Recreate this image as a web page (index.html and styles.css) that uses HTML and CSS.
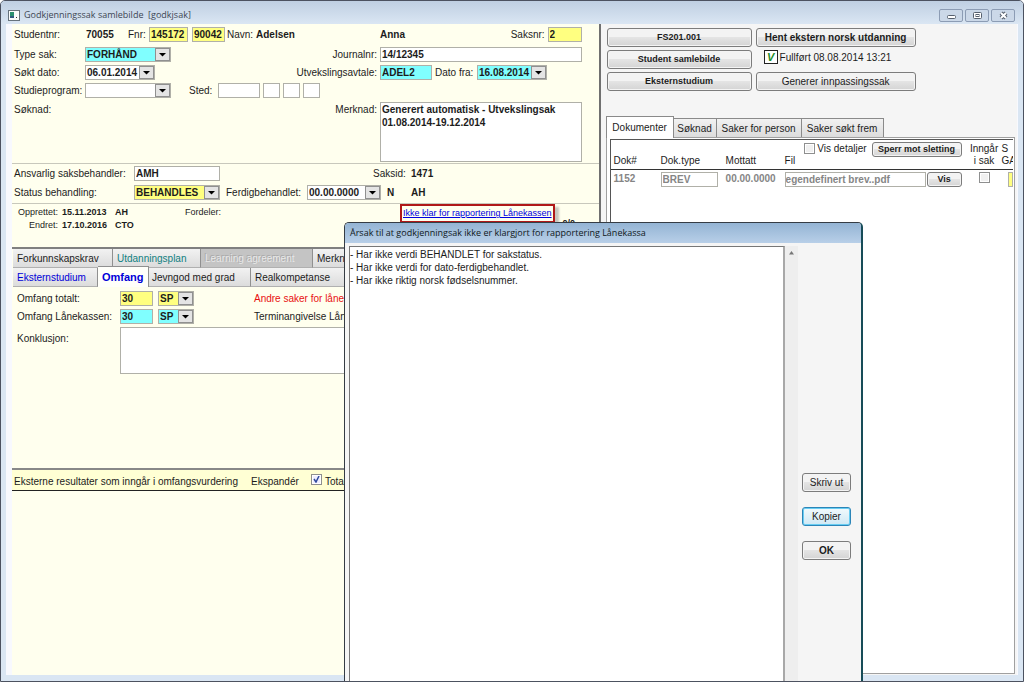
FILE: index.html
```html
<!DOCTYPE html>
<html lang="no">
<head>
<meta charset="utf-8">
<title>Godkjenningssak samlebilde</title>
<link rel="stylesheet" href="styles.css">
</head>
<body>
<div class="window">
  <header class="titlebar">
    <svg class="app-icon" width="12" height="11" viewBox="0 0 12 11"><rect x=".5" y=".5" width="11" height="10" fill="#fafcfc" stroke="#66727c"/><rect x="2" y="2" width="4" height="6" fill="#2a9070"/><rect x="2" y="6" width="4" height="2" fill="#315b80"/><rect x="8" y="7" width="1" height="1" fill="#333"/></svg>
    <h1>Godkjenningssak samlebilde&nbsp; [godkjsak]</h1>
    <div class="window-buttons">
      <button type="button" aria-label="Minimer"><svg width="11" height="9" viewBox="0 0 11 9"><rect x="1.500" y="4.500" width="8" height="3" rx="1" fill="#fff" stroke="#56606e"/></svg></button>
      <button type="button" aria-label="Maksimer"><svg width="11" height="9" viewBox="0 0 11 9"><rect x="1.500" y="1.500" width="8" height="6" rx="1" fill="#fff" stroke="#56606e"/><rect x="4" y="3.500" width="3" height="2" fill="#fff" stroke="#56606e"/></svg></button>
      <button type="button" aria-label="Lukk"><svg width="11" height="9" viewBox="0 0 11 9"><path d="M3 2 8 7M8 2 3 7" stroke="#56606e" stroke-width="4"/><path d="M3 2 8 7M8 2 3 7" stroke="#fff" stroke-width="2"/></svg></button>
    </div>
  </header>
  <main class="panes">
    <section class="left">
      <form class="case">
        <div class="row first">
          <span class="label">Studentnr:</span>
          <div class="mid">
            <b class="student">70055</b>
            <label class="fnr" for="fnr">Fnr:</label>
            <input id="fnr" class="yellow w38" value="145172">
            <input class="yellow w32 second" aria-label="Personnr" value="90042">
            <span class="name-label">Navn:</span><b>Adelsen</b>
          </div>
          <div class="end"><b>Anna</b><label class="push" for="saksnr">Saksnr:</label><input id="saksnr" class="yellow w34" value="2"></div>
        </div>
        <div class="row">
          <label for="type">Type sak:</label>
          <div class="mid"><select id="type" class="cyan w86"><option>FORHÅND</option></select><label class="push" for="journal">Journalnr:</label></div>
          <div class="end"><input id="journal" class="grow" value="14/12345"></div>
        </div>
        <div class="row">
          <label for="dato">Søkt dato:</label>
          <div class="mid"><select id="dato" class="w70"><option>06.01.2014</option></select><label class="push" for="avtale">Utvekslingsavtale:</label></div>
          <div class="end"><input id="avtale" class="cyan w52" value="ADEL2"><label class="from" for="fra">Dato fra:</label><select id="fra" class="cyan w70"><option>16.08.2014</option></select></div>
        </div>
        <div class="row">
          <label for="program">Studieprogram:</label>
          <div class="mid"><select id="program" class="w86"><option></option></select><label class="sted" for="sted">Sted:</label>
            <div class="places"><input id="sted" class="w42"><input class="w17" aria-label="Sted 2"><input class="w17" aria-label="Sted 3"><input class="w17" aria-label="Sted 4"></div></div>
        </div>
        <div class="row note">
          <span>Søknad:</span>
          <div class="mid"><label class="push" for="merknad">Merknad:</label></div>
          <div class="end"><textarea id="merknad" class="grow">Generert automatisk - Utvekslingsak
01.08.2014-19.12.2014</textarea></div>
        </div>
      </form>
      <div class="status">
        <div class="srow"><label for="ansvarlig">Ansvarlig saksbehandler:</label><input id="ansvarlig" class="w86" value="AMH"><span class="saksid">Saksid:</span><b>1471</b></div>
        <div class="srow"><label for="status">Status behandling:</label><select id="status" class="yellow w86"><option>BEHANDLES</option></select><label class="done" for="ferdig">Ferdigbehandlet:</label><select id="ferdig" class="w74"><option>00.00.0000</option></select><b class="flag">N</b><b>AH</b></div>
      </div>
      <div class="audit">
        <dl>
          <dt>Opprettet:</dt><dd>15.11.2013</dd><dd>AH</dd><dd class="plain">Fordeler:</dd>
          <dt>Endret:</dt><dd>17.10.2016</dd><dd>CTO</dd>
        </dl>
        <div class="report"><a href="#arsak">Ikke klar for rapportering Lånekassen</a></div>
        <b class="counter">0/0</b>
      </div>
      <nav class="tabs">
        <div class="tabline upper"><button type="button">Forkunnskapskrav</button><button type="button" class="teal">Utdanningsplan</button><button type="button" class="off" disabled>Learning agreement</button><button type="button">Merknader</button></div>
        <div class="tabline lower"><button type="button" class="blue">Eksternstudium</button><button type="button" class="current">Omfang</button><button type="button">Jevngod med grad</button><button type="button">Realkompetanse</button></div>
      </nav>
      <div class="scope">
        <div class="orow"><label for="total">Omfang totalt:</label><input id="total" class="yellow" value="30"><select class="yellow" aria-label="Enhet totalt"><option>SP</option></select><span class="red">Andre saker for lånekassen</span></div>
        <div class="orow"><label for="laan">Omfang Lånekassen:</label><input id="laan" class="cyan" value="30"><select class="cyan" aria-label="Enhet Lånekassen"><option>SP</option></select><span>Terminangivelse Lånekassen</span></div>
        <div class="crow"><label for="konklusjon">Konklusjon:</label><textarea id="konklusjon"></textarea></div>
      </div>
      <div class="results">
        <div class="results-head"><span>Eksterne resultater som inngår i omfangsvurdering</span><span class="expand">Ekspandér</span><label><input type="checkbox" checked>Total</label></div>
      </div>
    </section>
    <section class="right">
      <div class="actions">
        <button type="button" class="small">FS201.001</button><button type="button" class="strong">Hent ekstern norsk utdanning</button>
        <button type="button" class="small">Student samlebilde</button><div class="finished"><i>V</i>Fullført 08.08.2014 13:21</div>
        <button type="button" class="small">Eksternstudium</button><button type="button">Generer innpassingssak</button>
      </div>
      <nav class="doctabs"><button type="button" class="current">Dokumenter</button><button type="button">Søknad</button><button type="button">Saker for person</button><button type="button">Saker søkt frem</button></nav>
      <div class="docs">
        <div class="docs-inner">
          <table>
            <colgroup><col class="c1"><col class="c2"><col class="c3"><col class="c4"><col class="c5"><col class="c6"><col class="c7"></colgroup>
            <thead><tr><th>Dok#</th><th>Dok.type</th><th>Mottatt</th>
              <th colspan="2"><div class="tools"><label><input type="checkbox">Vis detaljer</label><button type="button" class="small">Sperr mot sletting</button></div>Fil</th>
              <th class="center">Inngår<br>i sak</th><th class="cut">S<br>GA</th></tr></thead>
            <tbody><tr><td>1152</td><td><input class="doctype" aria-label="Dok.type" value="BREV"></td><td>00.00.0000</td><td><input class="file" aria-label="Fil" value="egendefinert brev..pdf"></td><td><button type="button" class="small vis">Vis</button></td><td class="center"><input type="checkbox" aria-label="Inngår i sak"></td><td><div class="mark"></div></td></tr></tbody>
          </table>
        </div>
      </div>
    </section>
  </main>
  <div class="dialog" id="arsak" role="dialog" aria-labelledby="dialog-title">
    <h2 id="dialog-title">Årsak til at godkjenningsak ikke er klargjort for rapportering Lånekassa</h2>
    <div class="dialog-body">
      <textarea readonly aria-labelledby="dialog-title">- Har ikke verdi BEHANDLET for sakstatus.
- Har ikke verdi for dato-ferdigbehandlet.
- Har ikke riktig norsk fødselsnummer.</textarea>
      <div class="scroll"><svg width="7" height="4" viewBox="0 0 7 4"><path d="M1 3.500 3.500 0 6 3.500z" fill="#777"/></svg></div>
      <div class="dialog-buttons"><button type="button">Skriv ut</button><button type="button" class="focus">Kopier</button><button type="button" class="strong">OK</button></div>
    </div>
  </div>
</div>
</body>
</html>
```
FILE: styles.css
```css
* { box-sizing: border-box; }
body {
  margin: 0;
  font: 10px/15px "Liberation Sans", Arial, sans-serif;
  color: #1c1c1c;
}
input, select, textarea, button { font: inherit; color: inherit; margin: 0; border-radius: 0; }
b, label, span { white-space: nowrap; }

.window {
  position: relative;
  display: flex;
  flex-direction: column;
  height: 100vh;
  overflow: hidden;
  border: 1px solid #4c5260;
  border-radius: 5px 5px 0 0;
  background: #dae6f3;
  padding: 0 5px 6px;
}
.titlebar {
  display: flex;
  align-items: center;
  height: 23px;
  margin: 0 -5px;
  padding: 5px 8px 0 7px;
  background: linear-gradient(#bfcfe2, #dae6f3);
}
.titlebar h1 { flex: 1; margin: 0 0 0 4px; font: 9px/16px "Open Sans", "Noto Sans", sans-serif; color: #3d4653; }
.window-buttons { display: flex; gap: 2px; }
.window-buttons button {
  display: grid;
  place-items: center;
  width: 24px;
  height: 13px;
  padding: 0;
  border: 1px solid #8c9cb4;
  border-radius: 2px;
  background: #cbd8e8;
}
.panes {
  flex: 1;
  min-height: 0;
  display: grid;
  grid-template-columns: minmax(0, 588fr) minmax(0, 416fr);
  padding: 0 1px 0 6px;
  background: #f8f9fe;
}
.left {
  display: flex;
  flex-direction: column;
  overflow: hidden;
  border-right: 2px solid #707070;
  background: #ffffee;
}

/* fields */
input:not([type=checkbox]), select, textarea {
  height: 15px;
  min-width: 0;
  padding: 0 1px;
  border: 1px solid #b0b0a8;
  background-color: #fff;
  font-weight: bold;
  line-height: 13px;
}
select {
  appearance: none;
  background: url("data:image/svg+xml,%3Csvg xmlns='http://www.w3.org/2000/svg' width='15' height='13'%3E%3Crect x='.5' y='.5' width='14' height='12' fill='%23e4e4e4' stroke='%23909090'/%3E%3Cpath d='M4 5h7L7.500 8.500z' fill='%23000'/%3E%3C/svg%3E") right center no-repeat #fff;
}
textarea { resize: none; display: block; overflow: hidden; }
input:not([type=checkbox]).yellow, select.yellow { background-color: #ffff80; }
input:not([type=checkbox]).cyan, select.cyan { background-color: #80ffff; }
input[type=checkbox] {
  appearance: none;
  width: 11px;
  height: 11px;
  border: 1px solid #8e8f8f;
  background: #f0f0f0;
  box-shadow: inset 0 0 0 1px #fff;
}
input[type=checkbox]:checked { background: url("data:image/svg+xml,%3Csvg xmlns='http://www.w3.org/2000/svg' width='9' height='9'%3E%3Cpath d='M2 4l2 3 3-6' fill='none' stroke='%23304a9c' stroke-width='1.500'/%3E%3C/svg%3E") center no-repeat #eef; }
.w17 { width: 17px; }
.w32 { width: 33px; }
.w34 { width: 34px; }
.w38 { width: 39px; }
.w42 { width: 42px; }
.w52 { width: 52px; }
.w70 { width: 70px; }
.w74 { width: 74px; }
.w86 { width: 86px; }
.grow { flex: 1; }
.push { margin-left: auto; }

.case {
  display: flex;
  flex-direction: column;
  gap: 3px;
  height: 140px;
  padding: 3px 17px 0 2px;
  border-bottom: 1px solid #c8c8bc;
}
.row { display: grid; grid-template-columns: 71px 292px 1fr; height: 15px; }
.row.first { margin-bottom: 2px; }
.row.note { height: 60px; margin-top: 1px; }
.mid, .end { display: flex; min-width: 0; }
.end { margin-left: 3px; }
.push + input { margin-left: 3px; }
.student { width: 43px; padding-left: 1px; }
.fnr { width: 21px; }
.second { margin-left: 4px; }
.name-label { width: 31px; padding-left: 2px; }
.from { width: 45px; padding-left: 3px; }
.sted { width: 47px; padding-left: 18px; }
.places { display: flex; gap: 3px; }
.row.note textarea { height: 60px; }

.status { display: flex; flex-direction: column; gap: 4px; padding: 2px 2px 3px; border-bottom: 1px solid #c8c8bc; }
.srow { display: flex; height: 15px; }
.srow > label:first-child { width: 120px; }
.saksid { width: 191px; padding-left: 153px; }
.done { width: 87px; padding-left: 6px; }
.flag { width: 30px; padding-left: 6px; }

.audit { display: flex; height: 43px; flex: none; align-items: flex-start; }
.audit dl {
  display: grid;
  grid-template-columns: 46px 49px 66px 40px;
  column-gap: 4px;
  width: 388px;
  margin: 2px 0 0;
  font-size: 9px;
  line-height: 13px;
}
.audit dt { text-align: right; }
.audit dd { margin: 0; font-weight: bold; white-space: nowrap; }
.audit dd.plain { font-weight: normal; }
.report {
  flex: none;
  height: 19px;
  padding: 1px 1px;
  border: 2px solid #b01818;
  background: #ffffee;
  box-shadow: 4px 3px 2px #c8c8be;
  font-size: 9px;
  line-height: 13px;
}
.report a { color: #0000e0; white-space: nowrap; }
.counter { margin: 12px 0 0 8px; font-size: 9px; }

/* tabs */
.tabs { flex: none; border-top: 2px solid #808080; }
.tabline { display: flex; height: 19px; padding-left: 1px; }
.tabline button {
  flex: none;
  padding: 1px 4px 0;
  border: 0;
  border-right: 1px solid #909090;
  border-bottom: 1px solid #b0b0b0;
  background: linear-gradient(#f2f2f2, #dcdcdc);
  text-align: left;
  white-space: nowrap;
}
.tabline button:nth-child(1) { width: 100px; }
.tabline button:nth-child(2) { width: 88px; }
.tabline button:nth-child(3) { width: 112px; }
.tabline button:nth-child(4) { flex: 1; }
.lower button:nth-child(1) { width: 85px; }
.lower button:nth-child(2) { width: 51px; }
.lower button:nth-child(3) { width: 102px; padding-left: 3px; }
.tabline .teal { color: #108080; }
.tabline .blue { color: #0000d8; }
.tabline .off { background: #c4c4c4; color: #e8e8e8; text-shadow: -1px -1px #a8a8a8; }
.tabline .current { margin-top: -2px; border-top: 1px solid #909090; border-bottom: 0; background: #fffffa; color: #0000d8; font-size: 11px; font-weight: bold; }

.scope { display: flex; flex-direction: column; gap: 3px; flex: none; height: 181px; padding: 4px 0 0 5px; }
.orow { display: grid; grid-template-columns: 98px 33px 36px 1fr; column-gap: 5px; height: 15px; }
.orow label { margin-right: -5px; }
.orow input, .orow select { width: 100%; }
.orow span { margin-left: 55px; }
.red { color: #e81010; }
.crow { display: grid; grid-template-columns: 103px 1fr; }
.crow label { padding-top: 4px; }
.crow textarea { width: 100%; height: 47px; }
.results { flex: 1; border-top: 2px solid #888; }
.results-head { display: flex; height: 21px; padding: 4px 2px 0; border-bottom: 1px solid #222; background: #ffffd4; }
.results-head > span:first-child { width: 237px; }
.results-head .expand { width: 60px; }
.results-head label { display: flex; gap: 3px; }

/* buttons */
.actions button, .docs button, .dialog button {
  padding: 0;
  border: 1px solid #7c7c7c;
  border-radius: 3px;
  background: linear-gradient(#f3f3f3 0 45%, #e4e4e4 50%, #d4d4d4);
  box-shadow: inset 0 0 0 1px #f4f4f4;
  white-space: nowrap;
}
.actions .small, .docs .small { font-size: 9px; font-weight: bold; }
.actions .strong, .dialog .strong { font-weight: bold; }
.right { display: flex; flex-direction: column; min-width: 0; padding: 4px 2px 1px 6px; background: #f5f5f5; }
.actions { display: grid; grid-template-columns: 145px 160px; grid-auto-rows: 19px; gap: 3px 4px; }
.finished { display: flex; gap: 2px; padding-left: 8px; }
.finished i { width: 14px; height: 14px; border: 1px solid #222; background: #fff; color: #1c8c28; font-size: 11px; font-weight: bold; line-height: 12px; text-align: center; }
.doctabs { display: flex; align-items: flex-end; height: 21px; margin: 25px 0 0 -1px; }
.doctabs button {
  height: 19px;
  padding: 0;
  border: 1px solid #8a8a8a;
  border-left: 0;
  border-bottom: 0;
  background: linear-gradient(#f2f2f2, #dcdcdc);
  text-align: center;
  white-space: nowrap;
}
.doctabs button:nth-child(1) { width: 68px; }
.doctabs button:nth-child(2) { width: 43px; }
.doctabs button:nth-child(3) { width: 85px; }
.doctabs button:nth-child(4) { width: 82px; }
.doctabs .current { position: relative; height: 22px; margin-bottom: -1px; border-left: 1px solid #8a8a8a; background: #fff; }
.docs { flex: 1; min-height: 0; margin-left: -1px; padding: 1px 1px 0 3px; border: 1px solid #a0a0a0; background: #fff; }
.docs-inner { height: 100%; overflow: hidden; border: solid #555; border-width: 1px 0 0 1px; }
table { width: 100%; table-layout: fixed; border-collapse: collapse; }
.c1 { width: 49px; }
.c2 { width: 64px; }
.c3 { width: 60px; }
.c4 { width: 142px; }
.c5 { width: 41px; }
.c6 { width: 35px; }
th, td { padding: 0 0 0 1px; vertical-align: bottom; text-align: left; font-weight: normal; white-space: nowrap; line-height: 12px; }
th { height: 29px; padding: 0 0 2px 3px; border-bottom: 1px solid #333; }
th:nth-child(2) { padding-left: 1px; }
th:nth-child(3), td:nth-child(3) { padding-left: 2px; }
th:nth-child(4) { padding-left: 1px; }
td { height: 20px; color: #858585; font-weight: bold; vertical-align: middle; }
td:first-child { padding-left: 3px; }
td .doctype { width: 57px; }
td .file { width: 141px; padding: 0; }
td .vis { display: block; width: 35px; height: 15px; color: #1c1c1c; }
th.center, td.center { text-align: center; padding-left: 0; }
th.cut { padding-left: 0; }
.tools { display: flex; justify-content: flex-end; align-items: center; gap: 5px; height: 15px; margin-bottom: -2px; padding-right: 5px; }
.tools label { display: flex; gap: 2px; line-height: 12px; }
.tools button { width: 90px; height: 15px; }
.mark { height: 15px; margin-left: 5px; border: 1px solid #b0b0a8; background: #ffff80; }

/* dialog */
.dialog {
  position: absolute;
  left: 343px;
  top: 221px;
  bottom: 0;
  width: 519px;
  display: flex;
  flex-direction: column;
  border: 1px solid #353c44;
  border-right: 2px solid #174c58;
  border-bottom: 0;
  border-radius: 5px 5px 0 0;
  background: #f5f5f5;
  overflow: hidden;
}
.dialog h2 { margin: 0; height: 20px; padding: 1px 5px; background: linear-gradient(#94b4d4, #b8cfe8); font: 9px/18px "Open Sans", "Noto Sans", sans-serif; color: #101820; }
.dialog-body { flex: 1; display: grid; grid-template-columns: 1fr 13px 63px; padding: 3px 0 0 4px; }
.dialog textarea { height: 100%; padding: 1px 0; border: 1px solid #777; border-bottom: 0; border-right: 2px solid #a8a8a8; font-weight: normal; }
.scroll { padding: 4px 3px; background: #eee; line-height: 4px; }
.dialog-buttons { display: flex; flex-direction: column; gap: 15px; padding: 227px 10px 0 4px; }
.dialog-buttons button { height: 19px; }
.dialog .focus { border-color: #2c85b8; background: linear-gradient(#f2fafd, #cfe8f4); box-shadow: inset 0 0 0 1px #68cdf2; }
```
